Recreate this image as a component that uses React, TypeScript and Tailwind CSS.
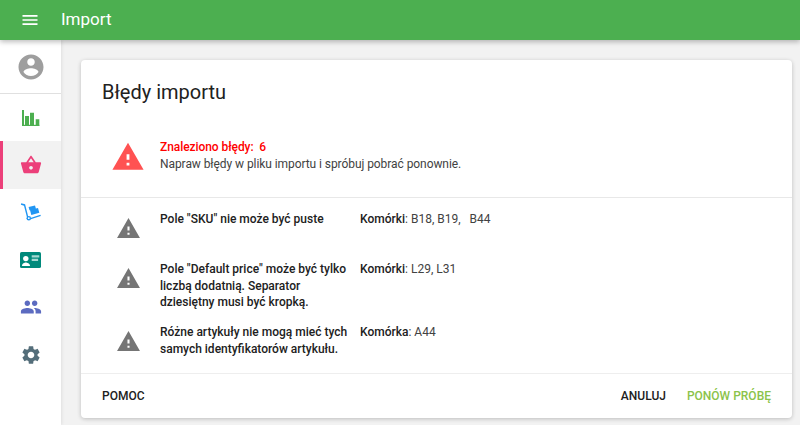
const MaterialIcon = ({ d, className }: { d: string; className: string }) => (
  <svg viewBox="0 0 24 24" fill="currentColor" className={className}>
    <path d={d} />
  </svg>
);

const WARNING =
  "M1 21h22L12 2 1 21zm12-3h-2v-2h2v2zm0-4h-2v-4h2v4z";
const MENU = "M3 18h18v-2H3v2zm0-5h18v-2H3v2zm0-7v2h18V6H3z";
const ACCOUNT =
  "M12 2C6.48 2 2 6.48 2 12s4.48 10 10 10 10-4.48 10-10S17.52 2 12 2zm0 3c1.66 0 3 1.34 3 3s-1.34 3-3 3-3-1.34-3-3 1.34-3 3-3zm0 14.2c-2.5 0-4.71-1.28-6-3.22.03-1.99 4-3.08 6-3.08 1.99 0 5.97 1.09 6 3.08-1.29 1.94-3.5 3.22-6 3.22z";
const BASKET =
  "M17.21 9l-4.38-6.56c-.19-.28-.51-.42-.83-.42-.32 0-.64.14-.83.43L6.79 9H2c-.55 0-1 .45-1 1 0 .09.01.18.04.27l2.54 9.27c.23.84 1 1.46 1.92 1.46h13c.92 0 1.69-.62 1.93-1.46l2.54-9.27L23 10c0-.55-.45-1-1-1h-4.79zM9 9l3-4.4L15 9H9zm3 8c-1.1 0-2-.9-2-2s.9-2 2-2 2 .9 2 2-.9 2-2 2z";
const PEOPLE =
  "M16 11c1.66 0 2.99-1.34 2.99-3S17.66 5 16 5c-1.66 0-3 1.34-3 3s1.34 3 3 3zm-8 0c1.66 0 2.99-1.34 2.99-3S9.66 5 8 5C6.34 5 5 6.34 5 8s1.34 3 3 3zm0 2c-2.33 0-7 1.17-7 3.5V19h14v-2.5c0-2.33-4.67-3.5-7-3.5zm8 0c-.29 0-.62.02-.97.05 1.16.84 1.97 1.97 1.97 3.45V19h6v-2.5c0-2.33-4.67-3.5-7-3.5z";
const SETTINGS =
  "M19.14 12.94c.04-.3.06-.61.06-.94 0-.32-.02-.64-.07-.94l2.03-1.58c.18-.14.23-.41.12-.61l-1.92-3.32c-.12-.22-.37-.29-.59-.22l-2.39.96c-.5-.38-1.03-.7-1.62-.94l-.36-2.54c-.04-.24-.24-.41-.48-.41h-3.84c-.24 0-.43.17-.47.41l-.36 2.54c-.59.24-1.13.57-1.62.94l-2.39-.96c-.22-.08-.47 0-.59.22L2.74 8.87c-.12.21-.08.47.12.61l2.03 1.58c-.05.3-.09.63-.09.94s.02.64.07.94l-2.03 1.58c-.18.14-.23.41-.12.61l1.92 3.32c.12.22.37.29.59.22l2.39-.96c.5.38 1.03.7 1.62.94l.36 2.54c.05.24.24.41.48.41h3.84c.24 0 .44-.17.47-.41l.36-2.54c.59-.24 1.13-.56 1.62-.94l2.39.96c.22.08.47 0 .59-.22l1.92-3.32c.12-.22.07-.47-.12-.61l-2.01-1.58zM12 15.6c-1.98 0-3.6-1.62-3.6-3.6s1.62-3.6 3.6-3.6 3.6 1.62 3.6 3.6-1.62 3.6-3.6 3.6z";

const ChartIcon = () => (
  <svg viewBox="0 0 18 18" fill="currentColor" className="w-[18px] h-[18px] text-[#4caf50]">
    <path d="M0 1h2v16H0zM3 7h4v10H3zM8 3.7h4V17H8zM13.7 10.3h3.6V17h-3.6z" />
    <path d="M0 15.8h17.3V17H0z" />
  </svg>
);

const DollyIcon = () => (
  <svg viewBox="0 0 22 22" fill="currentColor" className="w-[22px] h-[22px] text-[#2196f3]">
    <path d="M1.2 2.2l3.9 1.1 3.3 12.9-1.4.4-3-11.9-3.1-.9z" />
    <path d="M8.6 6.1l6.4-1.7.9 3.2-6.4 1.7zM10 9l8-2.1 1.3 4.9-8 2.1z" />
    <path d="M10.4 16.9l10-3.2.4 1.3-10 3.2z" />
    <circle cx="8.8" cy="17.2" r="2.3" />
    <circle cx="8.8" cy="17.2" r="0.9" fill="#fff" />
  </svg>
);

const ContactIcon = () => (
  <svg viewBox="0 0 21 16" className="w-[21px] h-4">
    <rect width="21" height="16" rx="1.6" fill="#00897b" />
    <circle cx="5.8" cy="6.6" r="2.7" fill="#fff" />
    <path d="M2 14c0-2.5 2.6-3.4 3.8-3.4S10 11.5 10 14z" fill="#fff" />
    <path d="M11.7 3.2h7.6v2.2h-7.6zM11.7 6.8h6.4V9h-6.4z" fill="#a7d8d2" />
  </svg>
);

const NavItem = ({ active, children }: { active?: boolean; children: React.ReactNode }) => (
  <div
    className={`h-[47.4px] flex items-center justify-center ${
      active ? "bg-[#f2f2f2] border-l-[3px] border-[#ec407a] pr-[3px]" : ""
    }`}
  >
    {children}
  </div>
);

const Sidebar = () => (
  <aside className="w-[61px] shrink-0 bg-white flex flex-col shadow-[1px_0_3px_rgba(0,0,0,0.08)]">
    <div className="h-[54px] shrink-0 flex items-center justify-center border-b border-[#e0e0e0]">
      <MaterialIcon d={ACCOUNT} className="w-[30px] h-[30px] text-[#9e9e9e]" />
    </div>
    <div className="flex flex-col">
      <NavItem>
        <ChartIcon />
      </NavItem>
      <NavItem active>
        <MaterialIcon d={BASKET} className="w-[22px] h-[22px] text-[#ec407a]" />
      </NavItem>
      <NavItem>
        <DollyIcon />
      </NavItem>
      <NavItem>
        <ContactIcon />
      </NavItem>
      <NavItem>
        <MaterialIcon d={PEOPLE} className="w-[22px] h-[22px] text-[#5c6bc0]" />
      </NavItem>
      <NavItem>
        <MaterialIcon d={SETTINGS} className="w-[22px] h-[22px] text-[#546e7a]" />
      </NavItem>
    </div>
  </aside>
);

const ErrorRow = ({
  message,
  label,
  cells,
  className,
}: {
  message: string;
  label: string;
  cells: string;
  className: string;
}) => (
  <div className={`flex ${className}`}>
    <div className="w-[58px] shrink-0 pl-[14px]">
      <MaterialIcon d={WARNING} className="w-[25px] h-[25px] text-[#757575] mt-[5px]" />
    </div>
    <p className="w-[200px] shrink-0 pr-[10px] font-medium text-[#212121]">{message}</p>
    <p className="text-[#424242] whitespace-pre">
      <span className="font-medium text-[#212121]">{label}</span>: {cells}
    </p>
  </div>
);

export default function App() {
  return (
    <div className="w-[800px] h-[425px] overflow-hidden flex flex-col bg-[#f2f2f2] font-['Roboto',sans-serif]">
      <header className="relative z-10 h-10 shrink-0 bg-[#4caf50] text-white flex items-center shadow-[0_2px_5px_rgba(0,0,0,0.26)]">
        <MaterialIcon d={MENU} className="w-5 h-5 ml-5" />
        <span className="ml-[21px] text-[17px]">Import</span>
      </header>

      <div className="flex-1 flex min-h-0">
        <Sidebar />
        <main className="flex-1 pl-5 pt-5">
          <section className="w-[711px] h-[358px] bg-white rounded shadow-[0_1px_4px_rgba(0,0,0,0.22)] flex flex-col text-xs leading-[17px]">
            <h1 className="pl-[21px] pt-[20px] text-xl leading-6 text-[#212121]">Błędy importu</h1>

            <div className="mt-[35px] h-[59px] shrink-0 flex border-b border-[#e8e8e8] pl-[30px]">
              <MaterialIcon d={WARNING} className="w-[34px] h-[34px] text-[#ff5252] mt-px" />
              <div className="ml-[15px] tracking-[-0.07px]">
                <p className="font-medium text-[#ff0000]">Znaleziono błędy: &nbsp;6</p>
                <p className="text-[#424242]">Napraw błędy w pliku importu i spróbuj pobrać ponownie.</p>
              </div>
            </div>

            <div className="flex-1 flex flex-col pl-[21px] pt-[13px] leading-[16.5px]">
              <ErrorRow message={'Pole "SKU" nie może być puste'} label="Komórki" cells="B18, B19,   B44" className="h-[50px]" />
              <ErrorRow
                message={'Pole "Default price" może być tylko liczbą dodatnią. Separator dziesiętny musi być kropką.'}
                label="Komórki"
                cells="L29, L31"
                className="h-[63px]"
              />
              <ErrorRow
                message="Różne artykuły nie mogą mieć tych samych identyfikatorów artykułu."
                label="Komórka"
                cells="A44"
                className="h-[49px]"
              />
            </div>

            <footer className="h-[45px] shrink-0 border-t border-[#eeeeee] flex items-center justify-between pl-[21px] pr-[21px] font-medium">
              <span className="text-[#212121]">POMOC</span>
              <div className="flex gap-[21px]">
                <span className="text-[#212121]">ANULUJ</span>
                <span className="text-[#8bc34a]">PONÓW PRÓBĘ</span>
              </div>
            </footer>
          </section>
        </main>
      </div>
    </div>
  );
}
